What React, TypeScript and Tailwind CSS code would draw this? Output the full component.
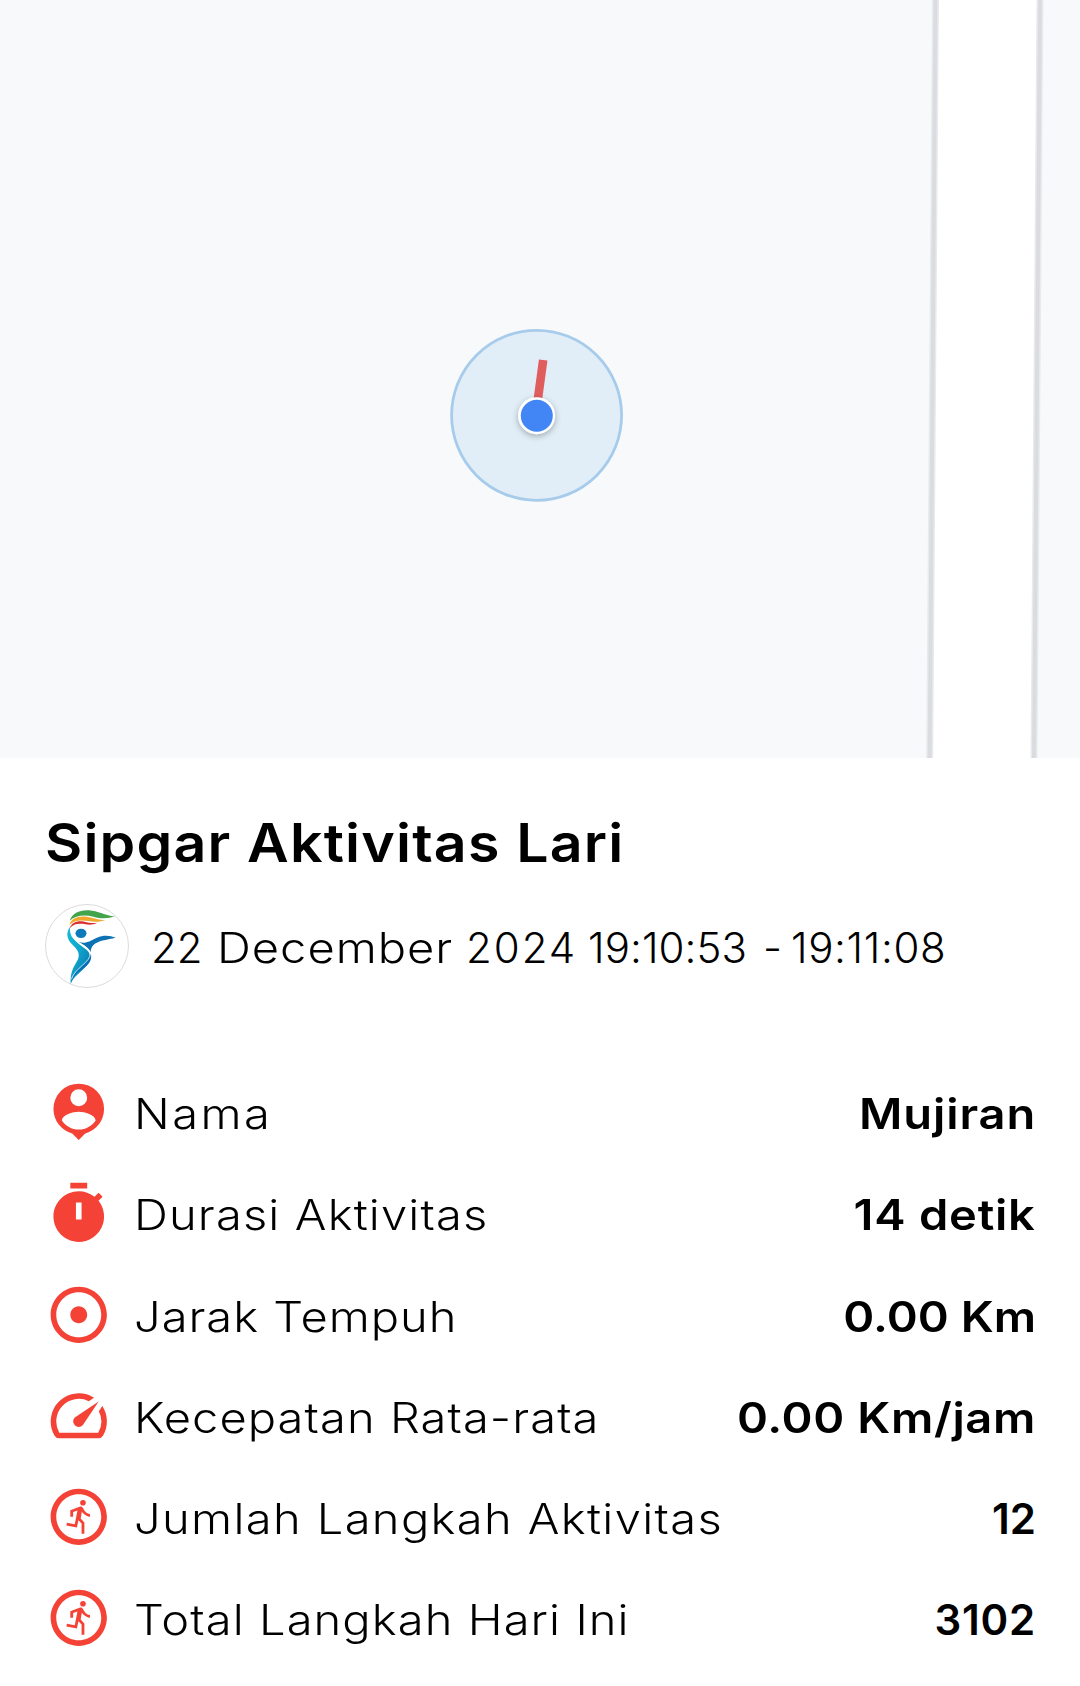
import React from "react";
import { MdAdjust, MdOutlineRunCircle, MdSpeed } from "react-icons/md";

interface IconProps {
  className?: string;
}

interface Stat {
  label: string;
  value: string;
  icon: React.ComponentType<IconProps>;
  labelClass: string;
  valueClass: string;
}

const PinIcon: React.FC<IconProps> = ({ className }) => (
  <svg viewBox="0 0 24 24" fill="currentColor" className={className}>
    <path
      fillRule="evenodd"
      d="M12 2a9 9 0 0 0-9 9c0 4.17 2.84 7.67 6.69 8.69L12 22l2.31-2.31C18.16 18.67 21 15.17 21 11a9 9 0 0 0-9-9zm0 2a3 3 0 1 1 0 6 3 3 0 0 1 0-6zm0 14.3c-2.5 0-4.71-1.28-6-3.22.03-1.99 4-3.08 6-3.08s5.97 1.09 6 3.08c-1.29 1.94-3.5 3.22-6 3.22z"
    />
  </svg>
);

const TimerIcon: React.FC<IconProps> = ({ className }) => (
  <svg viewBox="0 0 24 24" fill="currentColor" className={className}>
    <path d="M9 1h6v2H9zM19.03 7.39l1.42-1.42c-.43-.51-.9-.99-1.41-1.41l-1.42 1.42A8.962 8.962 0 0 0 12 4c-4.97 0-9 4.03-9 9s4.02 9 9 9a8.994 8.994 0 0 0 7.03-14.61zM13 14h-2V8h2v6z" />
  </svg>
);

const stats: Stat[] = [
  { label: "Nama", value: "Mujiran", icon: PinIcon, labelClass: "tracking-[2.2px]", valueClass: "scale-x-112 tracking-[0.8px]" },
  { label: "Durasi Aktivitas", value: "14 detik", icon: TimerIcon, labelClass: "tracking-[1.03px]", valueClass: "scale-x-112 tracking-[0.7px]" },
  { label: "Jarak Tempuh", value: "0.00 Km", icon: MdAdjust, labelClass: "tracking-[0.88px]", valueClass: "scale-x-112 tracking-[0px]" },
  { label: "Kecepatan Rata-rata", value: "0.00 Km/jam", icon: MdSpeed, labelClass: "tracking-[0.97px]", valueClass: "scale-x-112 tracking-[0.54px]" },
  { label: "Jumlah Langkah Aktivitas", value: "12", icon: MdOutlineRunCircle, labelClass: "tracking-[1.22px]", valueClass: "tracking-[0px]" },
  { label: "Total Langkah Hari Ini", value: "3102", icon: MdOutlineRunCircle, labelClass: "tracking-[0.97px]", valueClass: "tracking-[0.8px]" },
];

const RouteMap = () => (
  <svg viewBox="0 0 1080 758" className="block h-[758px] w-full bg-[#f8f9fb]">
    <defs>
      <filter id="dotShadow" x="-50%" y="-50%" width="200%" height="200%">
        <feDropShadow dx="0" dy="2" stdDeviation="3" floodColor="#000" floodOpacity="0.3" />
      </filter>
    </defs>
    {/* Road */}
    <path d="M935.5 0L929.7 758H1034L1040 0Z" fill="#fff" />
    <path d="M935.5 0L929.7 758M1040 0L1034 758" stroke="#e9eaed" strokeWidth="7" />
    <path d="M935.5 0L929.7 758M1040 0L1034 758" stroke="#dbdce0" strokeWidth="4" />
    {/* Accuracy radius */}
    <circle cx="536.6" cy="415.3" r="85" fill="#e1eef7" stroke="#a6cbeb" strokeWidth="2.8" />
    {/* Route */}
    <path d="M543.2 360L536.4 410" stroke="#e05d5d" strokeWidth="8.6" />
    <circle cx="536.6" cy="415.7" r="18.5" fill="#fff" filter="url(#dotShadow)" />
    <circle cx="536.8" cy="415.7" r="16" fill="#4285f4" />
  </svg>
);

const Logo = () => (
  <svg viewBox="45 42 252 252" className="h-21 w-21 shrink-0">
    <defs>
      <linearGradient id="body" x1="0" y1="0" x2="1" y2="1">
        <stop offset="0" stopColor="#16bcd4" />
        <stop offset="0.45" stopColor="#0fa6cb" />
        <stop offset="1" stopColor="#0a6db0" />
      </linearGradient>
    </defs>
    <circle cx="171" cy="168" r="124.5" fill="#fff" stroke="#c9c9c9" strokeWidth="2" />
    <path d="M119 92C128 66 155 57 186 62C214 66 230 78 256 79C233 87 212 86 190 80C162 73 138 76 119 92Z" fill="#43a54b" />
    <path d="M118 105C124 84 147 76 174 81C195 85 207 90 226 90C209 97 193 96 175 93C150 89 132 91 118 105Z" fill="#f0a92c" />
    <path d="M119 115C124 98 142 91 163 95C177 98 187 100 201 98C189 105 177 105 163 102C143 99 130 102 119 115Z" fill="#dc2f2f" />
    <ellipse cx="153" cy="130" rx="16.5" ry="14" fill="#0c79ba" />
    <path d="M121 110C107 126 110 146 126 163C140 177 150 187 145 205C140 221 120 236 122 281C135 250 174 238 180 205C184 179 157 175 137 153C123 138 117 125 121 110Z" fill="url(#body)" />
    <path d="M145 155C166 164 181 152 201 143C221 134 240 136 257 143C231 149 210 151 197 160C184 169 183 177 182 187C176 171 160 164 145 155Z" fill="#0c72b4" />
    <path d="M182 188C190 216 168 230 149 243C136 252 129 263 122 281C127 257 139 243 154 230C171 216 181 205 182 188Z" fill="#0a6fb3" />
    <path d="M124 136C137 160 172 165 181 188C183 218 135 232 124 268" fill="none" stroke="#fff" strokeWidth="2.2" />
  </svg>
);

export default function App() {
  return (
    <div className="min-h-[1686px] w-full overflow-hidden bg-white font-['Inter',sans-serif] text-black">
      <RouteMap />

      <div className="pt-[53px] pr-11 pl-[45px]">
        <h1 className="origin-left scale-x-108 whitespace-nowrap text-[53px] leading-[64px] font-semibold tracking-[1.1px]">
          Sipgar Aktivitas Lari
        </h1>

        <div className="mt-[29px] flex h-21 items-center">
          <Logo />
          <p className="ml-[22px] flex whitespace-nowrap pt-[3px] text-[42px] leading-[52px] font-light">
            <span className="w-[66px]">22</span>
            <span className="w-[249px] origin-left scale-x-112 tracking-[0.9px]">December</span>
            <span className="w-[122px] tracking-[2px]">2024</span>
            <span className="w-[175px] tracking-[0.1px]">19:10:53</span>
            <span className="w-7">-</span>
            <span className="tracking-[0.65px]">19:11:08</span>
          </p>
        </div>

        <div className="mt-[73.6px]">
          {stats.map((stat) => (
            <div key={stat.label} className="flex h-[101.2px] items-center">
              <stat.icon className="h-[67.5px] w-[67.5px] shrink-0 text-[#f44336]" />
              <span className={`ml-[21px] origin-left scale-x-112 whitespace-nowrap pt-1 text-[42px] leading-[52px] font-light ${stat.labelClass}`}>
                {stat.label}
              </span>
              <span className={`ml-auto origin-right whitespace-nowrap pt-1 text-[42px] leading-[52px] font-semibold ${stat.valueClass}`}>
                {stat.value}
              </span>
            </div>
          ))}
        </div>
      </div>
    </div>
  );
}
